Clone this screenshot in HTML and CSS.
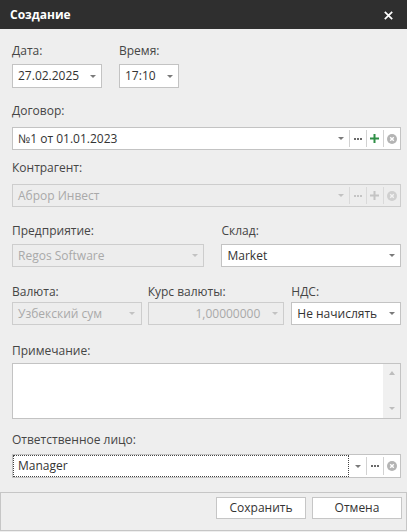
FILE: index.html
```html
<!DOCTYPE html>
<html lang="ru">
<head>
<meta charset="utf-8">
<title>Создание</title>
<link rel="stylesheet" href="styles.css">
</head>
<body>
<div class="window">
  <div class="titlebar">
    <span class="title">Создание</span>
    <svg class="close" width="9" height="9" viewBox="0 0 9 9"><path d="M0.8 0.8 L8.2 8.2 M8.2 0.8 L0.8 8.2" stroke="#fff" stroke-width="1.7" fill="none"/></svg>
  </div>
  <div class="content">
    <div class="row r1">
      <div class="field w-date">
        <div class="label">Дата:</div>
        <div class="input combo h24"><span class="val">27.02.2025</span><span class="arrowzone"><i class="tri"></i></span></div>
      </div>
      <div class="field w-time">
        <div class="label">Время:</div>
        <div class="input combo h24"><span class="val">17:10</span><span class="arrowzone"><i class="tri"></i></span></div>
      </div>
    </div>

    <div class="field r2">
      <div class="label">Договор:</div>
      <div class="input lookup">
        <span class="val">№1 от 01.01.2023</span>
        <span class="arrowzone"><i class="tri"></i></span>
        <span class="btn"><i class="dots"><b></b><b></b><b></b></i></span>
        <span class="btn"><svg width="9" height="9" viewBox="0 0 9 9"><path d="M4.5 0 V9 M0 4.5 H9" stroke="#2f8f47" stroke-width="2"/></svg></span>
        <span class="btn"><svg width="10" height="10" viewBox="0 0 10 10"><circle cx="5" cy="5" r="5" fill="#b4b4b4"/><path d="M3.2 3.2 L6.8 6.8 M6.8 3.2 L3.2 6.8" stroke="#fff" stroke-width="1.4"/></svg></span>
      </div>
    </div>

    <div class="field r3">
      <div class="label">Контрагент:</div>
      <div class="input lookup disabled">
        <span class="val">Аброр Инвест</span>
        <span class="arrowzone"><i class="tri"></i></span>
        <span class="btn"><i class="dots"><b></b><b></b><b></b></i></span>
        <span class="btn"><svg width="9" height="9" viewBox="0 0 9 9"><path d="M4.5 0 V9 M0 4.5 H9" stroke="#c4c4c4" stroke-width="2"/></svg></span>
        <span class="btn"><svg width="10" height="10" viewBox="0 0 10 10"><circle cx="5" cy="5" r="5" fill="#cfcfcf"/><path d="M3.2 3.2 L6.8 6.8 M6.8 3.2 L3.2 6.8" stroke="#f2f2f2" stroke-width="1.4"/></svg></span>
      </div>
    </div>

    <div class="row r4">
      <div class="field w-firm">
        <div class="label">Предприятие:</div>
        <div class="input combo disabled"><span class="val">Regos Software</span><span class="arrowzone"><i class="tri"></i></span></div>
      </div>
      <div class="field w-stock">
        <div class="label">Склад:</div>
        <div class="input combo"><span class="val">Market</span><span class="arrowzone"><i class="tri"></i></span></div>
      </div>
    </div>

    <div class="row r5">
      <div class="field w-cur">
        <div class="label">Валюта:</div>
        <div class="input combo disabled"><span class="val">Узбекский сум</span><span class="arrowzone"><i class="tri"></i></span></div>
      </div>
      <div class="field w-rate">
        <div class="label">Курс валюты:</div>
        <div class="input combo disabled"><span class="val right">1,00000000</span><span class="arrowzone"><i class="tri"></i></span></div>
      </div>
      <div class="field w-vat">
        <div class="label">НДС:</div>
        <div class="input combo"><span class="val">Не начислять</span><span class="arrowzone"><i class="tri"></i></span></div>
      </div>
    </div>

    <div class="field r6">
      <div class="label">Примечание:</div>
      <div class="memo">
        <div class="memo-text"></div>
        <div class="scrollbar"><i class="tri up"></i><i class="tri"></i></div>
      </div>
    </div>

    <div class="field r7">
      <div class="label">Ответственное лицо:</div>
      <div class="input lookup">
        <span class="val focus">Manager</span>
        <span class="arrowzone"><i class="tri"></i></span>
        <span class="btn"><i class="dots"><b></b><b></b><b></b></i></span>
        <span class="btn"><svg width="10" height="10" viewBox="0 0 10 10"><circle cx="5" cy="5" r="5" fill="#b4b4b4"/><path d="M3.2 3.2 L6.8 6.8 M6.8 3.2 L3.2 6.8" stroke="#fff" stroke-width="1.4"/></svg></span>
      </div>
    </div>
  </div>
  <div class="footer">
    <button class="button">Сохранить</button>
    <button class="button">Отмена</button>
  </div>
</div>
</body>
</html>
```
FILE: styles.css
```css
* { box-sizing: border-box; }
html, body {
  margin: 0;
  padding: 0;
  background: #eeeeee;
  font-family: "Open Sans", "Noto Sans", sans-serif;
  font-size: 12px;
  color: #444;
}
.window {
  width: 407px;
  height: 532px;
  display: flex;
  flex-direction: column;
}
.titlebar {
  height: 29px;
  background: #2f2f2f;
  display: flex;
  align-items: center;
  justify-content: space-between;
  padding: 0 14px 0 10px;
}
.title {
  color: #fff;
  font-weight: bold;
  font-size: 12px;
  line-height: 16px;
}
.close { display: block; margin-top: 1px; }
.content {
  padding: 14px 6px 0 12px;
  display: flex;
  flex-direction: column;
}
.row { display: flex; }
.field { display: flex; flex-direction: column; }
.label {
  line-height: 16px;
  height: 16px;
  color: #454545;
  white-space: nowrap;
}
.input {
  height: 23px;
  background: #fff;
  border: 1px solid #c3c3c3;
  display: flex;
  align-items: stretch;
  color: #333;
}
.input.h24 { height: 24px; }
.input.disabled {
  background: #ededed;
  border-color: #cdcdcd;
  color: #a9a9a9;
}
.val {
  flex: 1;
  padding-left: 5px;
  display: flex;
  align-items: center;
  white-space: nowrap;
  overflow: hidden;
  line-height: 16px;
}
.val.right { justify-content: flex-end; padding-right: 6px; }
.val.focus {
  border: 1px dotted #444;
  padding-left: 4px;
}
.arrowzone, .btn {
  width: 17px;
  flex: none;
  display: flex;
  align-items: center;
  justify-content: center;
}
.btn { position: relative; }
.btn::before {
  content: "";
  position: absolute;
  left: 0;
  top: 2px;
  bottom: 2px;
  width: 1px;
  background: #d2d2d2;
}
.disabled .btn::before { background: #dadada; }
.tri {
  display: block;
  width: 0;
  height: 0;
  border-left: 3.5px solid transparent;
  border-right: 3.5px solid transparent;
  border-top: 3.5px solid #7a7a7a;
}
.disabled .tri { border-top-color: #c2c2c2; }
.tri.up {
  border-top: 0;
  border-bottom: 4px solid #bdbdbd;
}
.dots { display: flex; gap: 1px; }
.dots b { display: block; width: 2px; height: 2px; background: #6a6a6a; }
.disabled .dots b { background: #c4c4c4; }

.w-date { width: 90px; }
.w-time { width: 60px; margin-left: 17px; }
.r1 .label { margin-bottom: 5px; }

.r2 { margin-top: 15px; }
.r2 .label { margin-bottom: 8px; }
.r3 { margin-top: 10px; }
.r3 .label { margin-bottom: 8px; }

.r4 { margin-top: 16px; }
.r4 .label { margin-bottom: 5px; }
.w-firm { width: 193px; }
.w-stock { width: 180px; margin-left: 17px; }

.r5 { margin-top: 17px; }
.r5 .label { margin-bottom: 2px; }
.w-cur { width: 130px; }
.w-rate { width: 137px; margin-left: 6px; }
.w-vat { width: 110px; margin-left: 7px; }

.r6 { margin-top: 18px; }
.r6 .label { margin-bottom: 4px; }
.memo {
  height: 56px;
  background: #fff;
  border: 1px solid #c3c3c3;
  display: flex;
}
.memo-text { flex: 1; }
.scrollbar {
  width: 17px;
  background: #f0f0f0;
  display: flex;
  flex-direction: column;
  justify-content: space-between;
  align-items: center;
  padding: 7px 0 8px;
}
.scrollbar .tri { border-top-color: #bdbdbd; }

.r7 { margin-top: 13px; }
.r7 .label { margin-bottom: 6px; }
.r7 .input { height: 24px; }

.footer {
  margin-top: 14px;
  height: 39px;
  border: 1px solid #c6c6c6;
  display: flex;
  justify-content: flex-end;
  align-items: flex-start;
  gap: 6px;
  padding: 4px 4px 0 0;
}
.button {
  width: 90px;
  height: 22px;
  background: #fff;
  border: 1px solid #c6c6c6;
  font-family: "Open Sans", "Noto Sans", sans-serif;
  font-size: 12px;
  color: #333;
  padding: 0;
  line-height: 20px;
}
```
